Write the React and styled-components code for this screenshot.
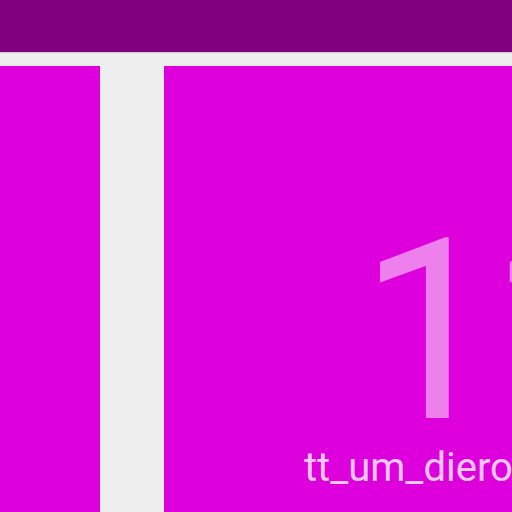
import React from 'react';
import styled, { createGlobalStyle } from 'styled-components';

const Global = createGlobalStyle`
  html, body {
    margin: 0;
    padding: 0;
    background: #eeeeee;
    font-family: Roboto, "Liberation Sans", sans-serif;
    overflow: hidden;
  }
`;

const Page = styled.div`
  width: 512px;
  height: 512px;
  overflow: hidden;
  display: flex;
  flex-direction: column;
`;

const TopBar = styled.header`
  height: 52px;
  flex: none;
  background: #800080;
  box-shadow: 0 1px 1px rgba(0, 0, 0, 0.15);
`;

const Board = styled.main`
  flex: 1;
  display: flex;
  gap: 64px;
  padding-top: 14px;
`;

const Tile = styled.section`
  flex: none;
  width: ${p => p.$width}px;
  background: #dd00dd;
  display: flex;
  flex-direction: column;
`;

const Count = styled.div`
  margin-top: 166px;
  padding-left: ${p => p.$indent}px;
  font-size: 252px;
  line-height: 200px;
  letter-spacing: -12px;
  color: rgba(255, 255, 255, 0.5);
  white-space: nowrap;
`;

const Name = styled.div`
  margin-top: 16px;
  padding-left: ${p => p.$indent}px;
  font-size: 40px;
  line-height: 40px;
  color: rgba(255, 255, 255, 0.8);
  white-space: nowrap;
`;

const App = () => {
  return (
    <Page>
      <Global />
      <TopBar />
      <Board>
        <Tile $width={100} />
        <Tile $width={520}>
          <Count $indent={195}>11</Count>
          <Name $indent={140}>tt_um_dierolf</Name>
        </Tile>
      </Board>
    </Page>
  );
};

export default App;
